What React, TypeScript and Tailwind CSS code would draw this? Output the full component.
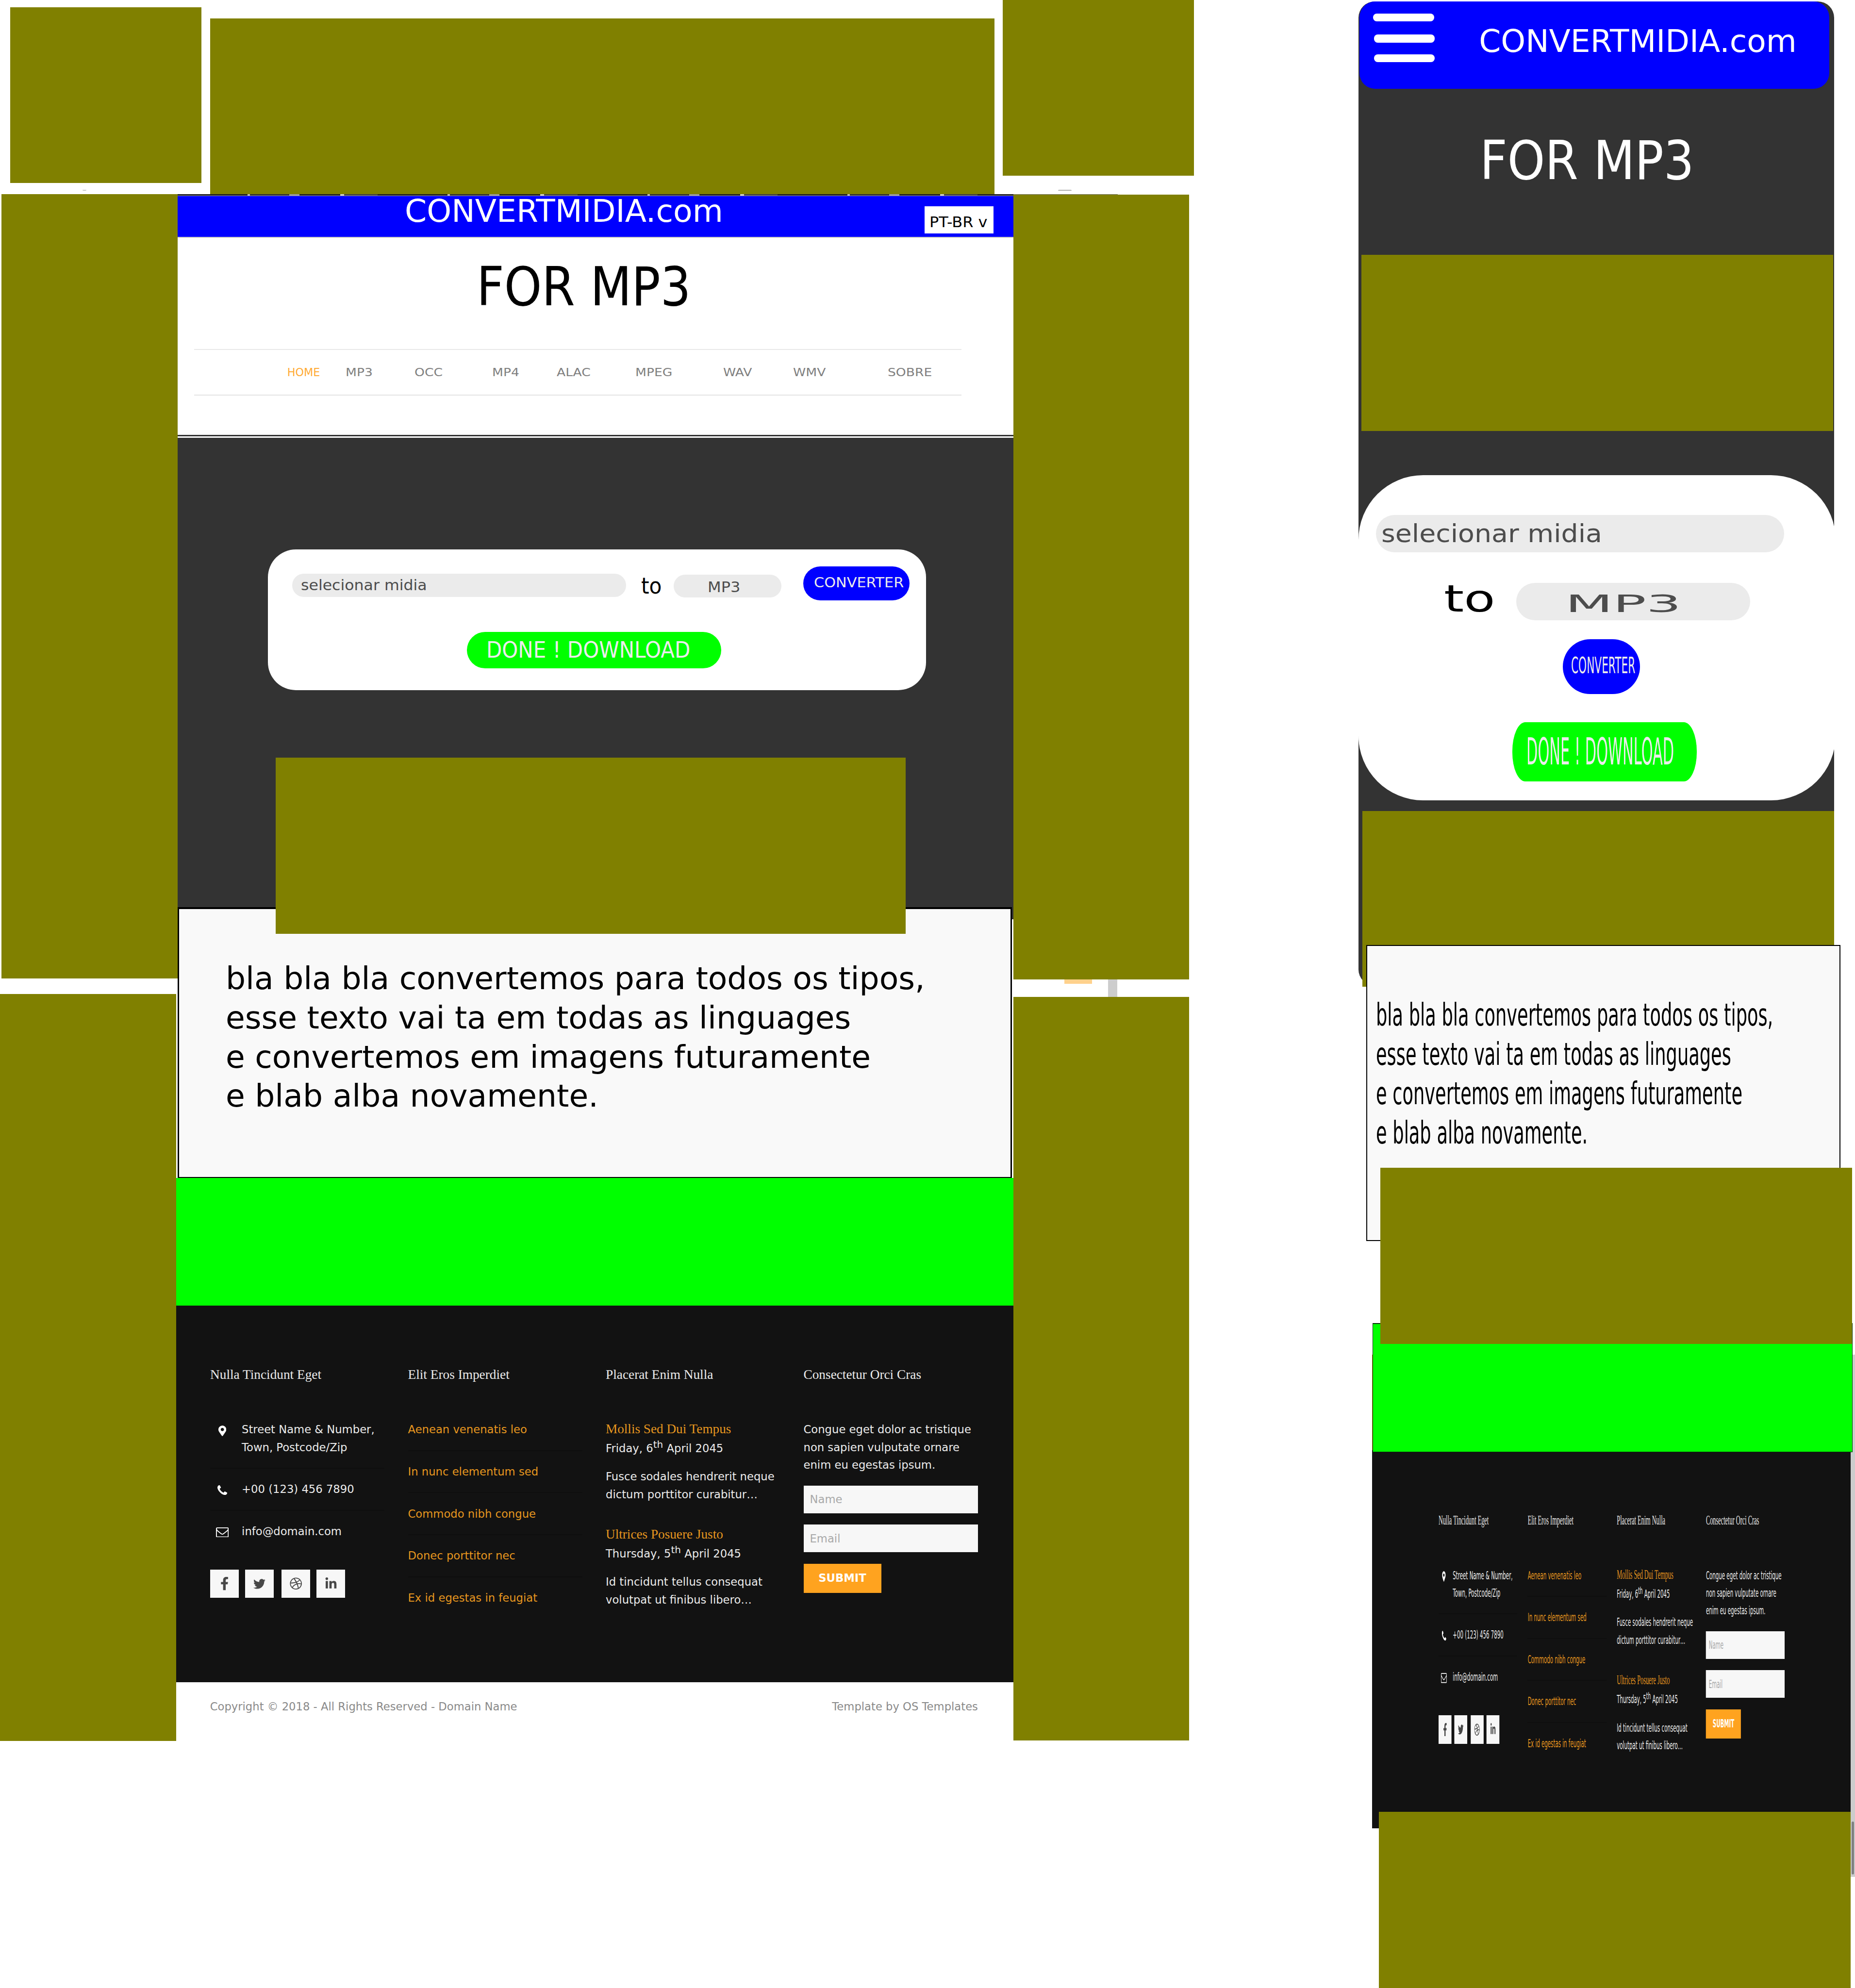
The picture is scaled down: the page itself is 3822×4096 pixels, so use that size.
import type { ReactNode } from "react";
import { FaDribbble, FaFacebookF, FaLinkedinIn, FaMapMarkerAlt, FaTwitter } from "react-icons/fa";

/* Single-line label; the artwork stretches most labels horizontally. */
function Label({ className, children }: { className: string; children: ReactNode }) {
  return (
    <span className={`block shrink-0 origin-left whitespace-nowrap leading-none ${className}`}>
      {children}
    </span>
  );
}

/* Olive advertising placeholder placed on the canvas. */
function Ad({ className }: { className: string }) {
  return <div className={`absolute bg-[#808000] ${className}`} />;
}

function PhoneIcon() {
  return (
    <svg viewBox="0 128 1408 1408" className="size-[21px]" fill="currentColor">
      <path d="M1408 1240q0 27-10 70.5t-21 68.5q-21 50-122 106-94 51-186 51-27 0-53-3.5t-57.5-12.5-47-14.5-55.5-20.5-49-18q-98-35-175-83-127-79-264-216t-216-264q-48-77-83-175-3-9-18-49t-20.500-55.500-14.500-47-12.500-57.500-3.500-53q0-92 51-186 56-101 106-122 25-11 68.500-21t70.500-10q14 0 21 3 18 6 53 76 11 19 30 54t35 63.500 31 53.500q3 4 17.500 25t21.500 35.500 7 28.500q0 20-28.500 50t-62 55-62 53-28.500 46q0 9 5 22.500t8.500 20.500 14 24 11.500 19q76 137 174 235t235 174q2 1 19 11.500t24 14 20.500 8.500 22.500 5q18 0 46-28.500t53-62 55-62 50-28.500q14 0 28.500 7t35.500 21.500 25 17.500q25 15 53.500 31t63.500 35 54 30q70 35 76 53 3 7 3 21z" />
    </svg>
  );
}

function EnvelopeIcon() {
  return (
    <svg viewBox="0 256 1792 1408" className="h-[21.500px] w-[27.400px]" fill="currentColor">
      <path d="M1664 1504v-768q-32 36-69 66-268 206-426 338-51 43-83 67t-86.500 48.500-102.500 24.500h-2q-48 0-102.500-24.500t-86.500-48.500-83-67q-158-132-426-338-37-30-69-66v768q0 13 9.500 22.500t22.500 9.500h1472q13 0 22.500-9.500t9.500-22.500zm0-1051v-24.500l-.5-13-3-12.500-5.500-9-9-7.500-14-2.500h-1472q-13 0-22.500 9.500t-9.500 22.500q0 168 147 284 193 152 401 317 6 5 35 29.500t46 37.500 44.500 31.500 50.500 27.500 43 9h2q20 0 43-9t50.500-27.500 44.500-31.500 46-37.500 35-29.500q208-165 401-317 54-43 100.500-115.500t46.500-131.500zm128-37v1088q0 66-47 113t-113 47h-1472q-66 0-113-47t-47-113v-1088q0-66 47-113t113-47h1472q66 0 113 47t47 113z" />
    </svg>
  );
}

const navItems = ["MP3", "OCC", "MP4", "ALAC", "MPEG", "WAV", "WMV", "SOBRE"];
const links = [
  "Aenean venenatis leo",
  "In nunc elementum sed",
  "Commodo nibh congue",
  "Donec porttitor nec",
  "Ex id egestas in feugiat",
];

function Blurb() {
  return (
    <>
      bla bla bla convertemos para todos os tipos,
      <br />
      esse texto vai ta em todas as linguages
      <br />
      e convertemos em imagens futuramente
      <br />
      e blab alba novamente.
    </>
  );
}

function Heading({ children }: { children: ReactNode }) {
  return (
    <h3 className="mb-[84.600px] font-['Liberation_Serif',serif] text-[28.500px] leading-none text-[#ebebeb]">
      {children}
    </h3>
  );
}

function Contact({ icon, children }: { icon: ReactNode; children: ReactNode }) {
  return (
    <div className="flex items-start whitespace-nowrap">
      <div className="-mb-[5px] mr-[16.500px] flex h-[42px] w-[51.400px] items-center justify-center text-white">
        {icon}
      </div>
      <div>{children}</div>
    </div>
  );
}

function Social({ className, children }: { className: string; children: ReactNode }) {
  return (
    <a className={`flex size-[61.400px] items-center justify-center bg-[#f7f7f7] text-[#474747] ${className}`}>
      {children}
    </a>
  );
}

function Post({ title, day, nth, text }: { title: string; day: string; nth: string; text: [string, string] }) {
  return (
    <article>
      <h4 className="mb-[8px] font-['Liberation_Serif',serif] text-[28.400px] leading-none text-[#e6961f]">
        {title}
      </h4>
      <p>
        {day}
        {nth}
        <sup className="-top-[8.500px] text-[21px] leading-none">th</sup> April 2045
      </p>
      <p className="mt-[23.500px]">
        {text[0]}
        <br />
        {text[1]}
      </p>
    </article>
  );
}

function FooterColumns() {
  return (
    <div className="grid w-[1651px] grid-cols-4 gap-x-[50.200px] whitespace-nowrap text-[23.700px] leading-[37.900px] text-[#ebebeb]">
      <div>
        <Heading>Nulla Tincidunt Eget</Heading>
        <div className="border-b-[2.200px] border-[#0e0e0e] pb-[25px]">
          <Contact icon={<FaMapMarkerAlt className="h-[23px] w-[17px]" />}>
            Street Name &amp; Number,
            <br />
            Town, Postcode/Zip
          </Contact>
        </div>
        <div className="border-b-[2.200px] border-[#0e0e0e] pb-[26px] pt-[24.800px]">
          <Contact icon={<PhoneIcon />}>+00 (123) 456 7890</Contact>
        </div>
        <div className="pt-[25px]">
          <Contact icon={<EnvelopeIcon />}>info@domain.com</Contact>
        </div>
        <div className="mt-[63px] flex">
          <Social className="">
            <FaFacebookF className="size-[28.500px]" />
          </Social>
          <Social className="ml-[13.900px]">
            <FaTwitter className="size-[26px]" />
          </Social>
          <Social className="ml-[16.500px]">
            <FaDribbble className="size-[26.500px]" />
          </Social>
          <Social className="ml-[14.400px]">
            <FaLinkedinIn className="size-[27px]" />
          </Social>
        </div>
      </div>
      <div>
        <Heading>Elit Eros Imperdiet</Heading>
        <ul className="text-[#e6961f]">
          {links.map((link) => (
            <li key={link} className="mb-[25.400px] border-b-[2.200px] border-[#0e0e0e] pb-[25px] last:border-0">
              {link}
            </li>
          ))}
        </ul>
      </div>
      <div>
        <Heading>Placerat Enim Nulla</Heading>
        <div className="flex flex-col gap-[53px] pt-[3.300px]">
          <Post
            title="Mollis Sed Dui Tempus"
            day="Friday, "
            nth="6"
            text={["Fusce sodales hendrerit neque", "dictum porttitor curabitur…"]}
          />
          <Post
            title="Ultrices Posuere Justo"
            day="Thursday, "
            nth="5"
            text={["Id tincidunt tellus consequat", "volutpat ut finibus libero…"]}
          />
        </div>
      </div>
      <div>
        <Heading>Consectetur Orci Cras</Heading>
        <p>
          Congue eget dolor ac tristique
          <br />
          non sapien vulputate ornare
          <br />
          enim eu egestas ipsum.
        </p>
        <div className="mt-[25.300px] flex h-[59.400px] items-center bg-[#f7f7f7] pl-[13.600px] text-[#a9a9a9]">
          Name
        </div>
        <div className="mt-[24.800px] flex h-[59.400px] items-center bg-[#f7f7f7] pl-[13.600px] text-[#a9a9a9]">
          Email
        </div>
        <div className="mt-[24.500px] flex h-[62.800px] w-[167px] items-center justify-center bg-[#ffa31f] pb-[2px] font-bold text-white">
          SUBMIT
        </div>
      </div>
    </div>
  );
}

function DesktopBoard() {
  return (
    <div className="absolute left-[378.600px] top-[418px] flex w-[1800.400px] flex-col">
      <div className="ml-[3px] h-[3.500px] border-b-[1.100px] border-[#9a9ab8] bg-[repeating-linear-gradient(90deg,#222_0_150px,#bbb_150px_156px,#333_156px_240px,#999_240px_262px,#222_262px_350px,#ccc_350px_358px,#444_358px_430px)]" />
      <header className="ml-[3px] flex h-[89.500px] items-start border-b-[2.200px] border-[#c8c8c8] bg-[#0000ff]">
        <div className="-mt-[1px] ml-[489px] w-[1117.700px] shrink-0 text-white">
          <Label className="text-[67.600px]">CONVERTMIDIA.com</Label>
        </div>
        <div className="mt-[22.500px] h-[58.500px] w-[148px] bg-white pl-[10.500px] pt-[18px] text-black">
          <Label className="scale-x-[1.06] text-[31.500px]">PT-BR v</Label>
        </div>
      </header>
      <section className="ml-[3px] flex h-[424px] flex-col bg-white pt-[49.300px] text-black">
        <Label className="ml-[643.500px] scale-x-[0.898] text-[114.600px]">FOR MP3</Label>
        <nav className="ml-[36px] mt-[75.500px] grid h-[100.500px] w-[1650px] grid-cols-[125.500px_148px_167.300px_139.300px_168.600px_189px_150.700px_202.700px_1fr] border-y-[2.200px] border-b-[#e4e4e4] border-t-[#e9e9e9] pl-[200px] pt-[36.500px] text-[23.300px] text-[#808080]">
          <Label className="text-[#ffab35]">HOME</Label>
          {navItems.map((item) => (
            <Label key={item} className="scale-x-[1.19]">
              {item}
            </Label>
          ))}
        </nav>
      </section>
      <div className="ml-[3px] h-[6px] border-t-[3.200px] border-[#333333] bg-white" />
      <section className="ml-[3px] flex h-[1010px] flex-col bg-[#333333] pt-[241px]">
        <div className="ml-[194.800px] flex h-[302px] w-[1414.600px] flex-col rounded-[60px] bg-white">
          <div className="flex items-start">
            <div className="ml-[51.600px] mt-[52px] h-[50px] w-[718px] rounded-full bg-[#ebebeb] pl-[18.800px] pt-[9px] text-[#4d4d4d]">
              <Label className="scale-x-[1.03] text-[32px]">selecionar midia</Label>
            </div>
            <div className="ml-[33px] mt-[54px] w-[69.400px] text-black">
              <Label className="scale-x-[0.92] text-[48px]">to</Label>
            </div>
            <div className="mt-[53.600px] h-[49.400px] w-[232.200px] rounded-full bg-[#ebebeb] pl-[73.500px] pt-[12px] text-[#4d4d4d]">
              <Label className="scale-x-[1.06] text-[31.600px]">MP3</Label>
            </div>
            <div className="ml-[47px] mt-[36px] h-[72.700px] w-[228px] rounded-full bg-[#0000ff] pl-[22.800px] pt-[20px] text-[#ececec]">
              <Label className="scale-x-[1.055] text-[30px]">CONVERTER</Label>
            </div>
          </div>
          <div className="ml-[427.600px] mt-[68.300px] h-[78px] w-[547px] rounded-full bg-[#00ff00] pl-[42px] pt-[14.400px] text-[#ececec]">
            <Label className="scale-x-[0.913] text-[48px]">DONE ! DOWNLOAD</Label>
          </div>
        </div>
      </section>
      <section className="ml-[3.500px] h-[582.500px] w-[1794px] border-x-[3.200px] border-b-[2.200px] border-t-[4.300px] border-black bg-[#f9f9f9] pl-[100px] pt-[107.300px] text-black">
        <p className="whitespace-nowrap text-[67.550px] leading-[84.300px]">
          <Blurb />
        </p>
      </section>
      <div className="h-[274.500px] bg-[#00ff00]" />
      <footer className="h-[810px] bg-[#121212] pl-[73.400px] pt-[134.400px]">
        <FooterColumns />
      </footer>
      <div className="flex h-[125px] justify-between bg-white pl-[73px] pr-[76px] pt-[40px] text-[23.700px] text-[#8a8a8a]">
        <Label className="">Copyright © 2018 - All Rights Reserved - Domain Name</Label>
        <Label className="">Template by OS Templates</Label>
      </div>
    </div>
  );
}

function MobileBoard() {
  return (
    <div className="absolute left-[2921px] top-[3px] flex h-[2117px] w-[1023.500px] flex-col rounded-[35px] bg-[#333333]">
      <header className="ml-[2px] flex h-[188px] w-[1011px] shrink-0 items-start rounded-[34px] bg-[#0000ff]">
        <div className="w-[257.400px] shrink-0 pl-[30px] pt-[26.300px]">
          <div className="h-[17px] w-[131px] rounded-[8px] bg-white" />
          <div className="ml-[1.400px] mt-[28.300px] h-[17px] w-[131px] rounded-[8px] bg-white" />
          <div className="ml-[1.400px] mt-[25.200px] h-[17px] w-[131px] rounded-[8px] bg-white" />
        </div>
        <Label className="mt-[52.800px] text-[67.500px] text-white">CONVERTMIDIA.com</Label>
      </header>
      <Label className="ml-[261px] mt-[98.500px] scale-x-[0.898] text-[114.600px] text-white">FOR MP3</Label>
      <section className="mt-[618px] flex h-[699px] w-[1026px] shrink-0 flex-col rounded-[139px] bg-white">
        <div className="ml-[37.500px] mt-[85.800px] h-[80px] w-[878.500px] rounded-full bg-[#ebebeb] pl-[12px] pt-[14px] text-[#4d4d4d]">
          <Label className="scale-x-[1.09] text-[53px]">selecionar midia</Label>
        </div>
        <div className="mt-[65.300px] flex h-[80.700px] items-start pl-[184px]">
          <div className="-mt-[3.400px] w-[156px] text-black">
            <Label className="scale-x-[1.39] text-[79px]">to</Label>
          </div>
          <div className="h-[80.700px] w-[502.400px] rounded-full bg-[#ebebeb] pl-[105px] pt-[19px] text-[#4d4d4d]">
            <Label className="scale-x-[2.27] text-[52.300px]">MP3</Label>
          </div>
        </div>
        <div className="ml-[440px] mt-[41px] h-[118px] w-[165.500px] rounded-full bg-[#0000ff] pl-[17px] pt-[33px] text-[#ececec]">
          <Label className="scale-x-[0.476] text-[47.500px]">CONVERTER</Label>
        </div>
        <div className="ml-[331px] mt-[60.200px] h-[127.600px] w-[396.800px] rounded-[28px/62px] bg-[#00ff00] pl-[30px] pt-[24px] text-[#ececec]">
          <Label className="scale-x-[0.399] text-[79.500px]">DONE ! DOWNLOAD</Label>
        </div>
      </section>
    </div>
  );
}

export default function App() {
  return (
    <main className="relative h-[4275px] w-[3989px] overflow-hidden bg-white font-['DejaVu_Sans',sans-serif] [zoom:0.95813]">
      {/* Desktop mock-up */}
      <div className="absolute left-[177px] top-[408.500px] h-[2px] w-[9px] rounded-b-full bg-[#c8c8c8]" />
      <div className="absolute left-[2275px] top-[408.500px] h-[2px] w-[30px] rounded-t-full bg-[#b0b0b0]" />
      <div className="absolute left-[2179px] top-[417px] h-[2px] w-[225px] bg-[#777777]" />
      <div className="absolute left-[2288.600px] top-[2100px] h-[16px] w-[60px] bg-[#ffd18c]" />
      <div className="absolute left-[2383px] top-[2100px] h-[50px] w-[20px] bg-[#cdcdcd]" />
      <DesktopBoard />
      <div className="absolute left-[2176px] top-[1951px] h-[26px] w-[3px] bg-[#333333]" />
      <Ad className="left-[21.500px] top-[15.500px] h-[378px] w-[411.500px]" />
      <Ad className="left-[452px] top-[39.500px] h-[378.500px] w-[1686.700px]" />
      <Ad className="left-[2156.400px] top-0 h-[378px] w-[410.600px]" />
      <Ad className="left-[3.300px] top-[417px] h-[1687.500px] w-[378.300px]" />
      <Ad className="left-0 top-[2138px] h-[1605.500px] w-[378.600px]" />
      <Ad className="left-[2179px] top-[418.500px] h-[1687.300px] w-[378px]" />
      <Ad className="left-[2179px] top-[2144px] h-[1599px] w-[378px]" />
      <Ad className="left-[592.600px] top-[1629.500px] h-[378.500px] w-[1355.400px]" />

      {/* Mobile mock-up */}
      <MobileBoard />
      <Ad className="left-[2927.200px] top-[548px] h-[378.700px] w-[1015.200px]" />
      <Ad className="left-[2930px] top-[1743.700px] h-[378.300px] w-[1014.500px]" />
      <section className="absolute left-[2938px] top-[2031.600px] h-[637px] w-[1019.700px] border-[2.600px] border-black bg-[#f9f9f9] pl-[19.200px] pt-[107.300px] text-black">
        <p className="w-[1500px] origin-left scale-x-[0.568] whitespace-nowrap text-[67.550px] leading-[84.300px]">
          <Blurb />
        </p>
      </section>
      <div className="absolute left-[3980px] top-[2913px] flex h-[1123px] w-[9px] flex-col items-center justify-end bg-[#cccccc] pb-[5px]">
        <div className="h-[114px] w-[5px] rounded-full bg-[#808080]" />
      </div>
      <footer className="absolute left-[2950.500px] top-[3119px] h-[812.500px] w-[1029.500px] bg-[#121212] pl-[143px] pt-[136.600px]">
        <div className="w-[1651px] origin-top-left scale-x-[0.4507]">
          <FooterColumns />
        </div>
      </footer>
      <div className="absolute left-[2950.500px] top-[2913px] h-[206px] w-[2px] bg-[#a07a10]" />
      <div className="absolute left-[2951.500px] top-[2845px] h-[277.500px] w-[1032px] border-[1.100px] border-t-[2.200px] border-[#063006] bg-[#00ff00]" />
      <Ad className="left-[2968px] top-[2511px] h-[378.700px] w-[1014.700px]" />
      <Ad className="left-[2965.300px] top-[3896.400px] h-[378.600px] w-[1014.700px]" />
    </main>
  );
}
